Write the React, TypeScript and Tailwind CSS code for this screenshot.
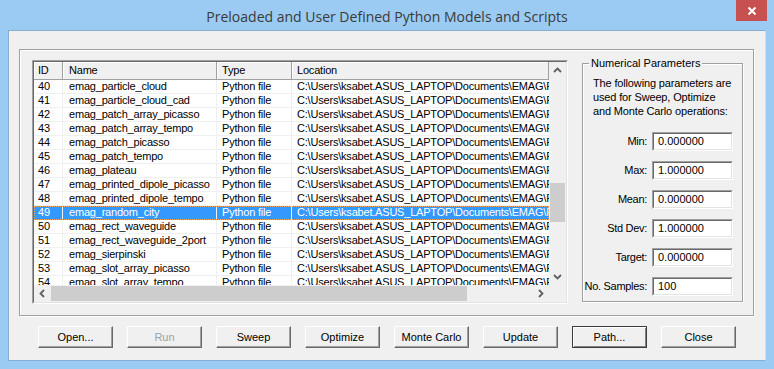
import type { ReactNode } from "react";

const LOC = "C:\\Users\\ksabet.ASUS_LAPTOP\\Documents\\EMAG\\Python\\models";

const rows = [
  { id: 40, name: "emag_particle_cloud" },
  { id: 41, name: "emag_particle_cloud_cad" },
  { id: 42, name: "emag_patch_array_picasso" },
  { id: 43, name: "emag_patch_array_tempo" },
  { id: 44, name: "emag_patch_picasso" },
  { id: 45, name: "emag_patch_tempo" },
  { id: 46, name: "emag_plateau" },
  { id: 47, name: "emag_printed_dipole_picasso" },
  { id: 48, name: "emag_printed_dipole_tempo" },
  { id: 49, name: "emag_random_city" },
  { id: 50, name: "emag_rect_waveguide" },
  { id: 51, name: "emag_rect_waveguide_2port" },
  { id: 52, name: "emag_sierpinski" },
  { id: 53, name: "emag_slot_array_picasso" },
  { id: 54, name: "emag_slot_array_tempo" },
];

const params = [
  { label: "Min:", value: "0.000000" },
  { label: "Max:", value: "1.000000" },
  { label: "Mean:", value: "0.000000" },
  { label: "Std Dev:", value: "1.000000" },
  { label: "Target:", value: "0.000000" },
  { label: "No. Samples:", value: "100" },
];

const buttons = ["Open...", "Run", "Sweep", "Optimize", "Monte Carlo", "Update", "Path...", "Close"];

// small chevron used on the scrollbar arrows
function Arrow({ dir }: { dir: "up" | "down" | "left" | "right" }) {
  const pts = {
    up: "1,6 4.5,2.5 8,6",
    down: "1,3 4.5,6.5 8,3",
    left: "6,1 2.5,4.5 6,8",
    right: "3,1 6.5,4.5 3,8",
  }[dir];
  return (
    <svg width="9" height="9" viewBox="0 0 9 9">
      <polyline points={pts} fill="none" stroke="#606060" strokeWidth="1.8" />
    </svg>
  );
}

function Sunken({ className, children }: { className?: string; children: ReactNode }) {
  return (
    <div className={`border border-t-[#a0a0a0] border-l-[#a0a0a0] border-b-white border-r-white ${className ?? ""}`}>
      <div className="w-full h-full border border-t-[#696969] border-l-[#696969] border-b-[#e3e3e3] border-r-[#e3e3e3] bg-white">
        {children}
      </div>
    </div>
  );
}

function HeaderCell({ w, pl, children }: { w: string; pl: string; children: ReactNode }) {
  return (
    <div
      className={`${w} ${pl} h-full flex items-center shrink-0 border-r border-r-[#a0a0a0] border-l border-l-white shadow-[inset_0_1px_0_white]`}
    >
      {children}
    </div>
  );
}

function App() {
  return (
    <div
      className="w-[774px] h-[369px] bg-[#9bcbf2] flex flex-col relative"
      style={{ fontFamily: '"Liberation Sans", Arial, sans-serif' }}
    >
      {/* title bar */}
      <div className="h-[30px] flex items-center justify-center shrink-0">
        <span
          className="text-[14px] text-[#3a3a3a] pt-[2px]"
          style={{ fontFamily: '"Open Sans", "Noto Sans", sans-serif' }}
        >
          Preloaded and User Defined Python Models and Scripts
        </span>
      </div>
      <div className="absolute top-0 right-[7px] w-[31px] h-[21px] bg-[#c75050] flex items-center justify-center">
        <svg width="10" height="10" viewBox="0 0 10 10">
          <path d="M1.5 1.5 L8.5 8.5 M8.5 1.5 L1.5 8.5" stroke="white" strokeWidth="2" />
        </svg>
      </div>

      {/* client area */}
      <div className="mx-[8px] h-[331px] bg-[#f0f0f0] border border-[#86add2] border-r-[#c9e0f3] flex flex-col text-[11px] text-black">
        <div className="mt-[18px] ml-[10px] mr-[11px] h-[267px] border border-[#a0a0a0] shadow-[inset_1px_1px_0_white,1px_1px_0_white] flex items-start pt-[10px] pl-[12px]">
          {/* list view */}
          <Sunken className="w-[536px] h-[244px] shrink-0">
            <div className="flex flex-col w-full h-full tracking-[-0.2px]">
              <div className="flex flex-1 min-h-0">
                <div className="flex-1 min-w-0 flex flex-col overflow-hidden">
                  <div className="h-[18px] flex shrink-0 bg-[#f0f0f0] border-b border-b-[#a0a0a0]">
                    <HeaderCell w="w-[29px]" pl="pl-[3px]">ID</HeaderCell>
                    <HeaderCell w="w-[154px]" pl="pl-[5px]">Name</HeaderCell>
                    <HeaderCell w="w-[75px]" pl="pl-[4px]">Type</HeaderCell>
                    <HeaderCell w="flex-1" pl="pl-[4px]">Location</HeaderCell>
                  </div>
                  <div className="flex flex-col overflow-hidden">
                    {rows.map((r) => {
                      const sel = r.id === 49;
                      return (
                        <div
                          key={r.id}
                          className={`h-[14px] shrink-0 flex leading-[13px] whitespace-nowrap ${
                            sel
                              ? "bg-[#3399ff] text-white outline outline-1 outline-dotted outline-offset-[-1px] outline-[#f0a860]"
                              : "border-b border-b-[#f0f0f0]"
                          }`}
                        >
                          <div className="w-[29px] pl-[4px] shrink-0 border-r border-r-[#f0f0f0]">{r.id}</div>
                          <div className="w-[154px] pl-[6px] shrink-0 border-r border-r-[#f0f0f0] overflow-hidden">{r.name}</div>
                          <div className="w-[75px] pl-[5px] shrink-0 border-r border-r-[#f0f0f0]">Python file</div>
                          <div className="flex-1 pl-[5px] overflow-hidden">{LOC}</div>
                        </div>
                      );
                    })}
                  </div>
                </div>
                {/* vertical scrollbar */}
                <div className="w-[17px] shrink-0 bg-[#f0f0f0] flex flex-col items-center">
                  <div className="h-[17px] flex items-center justify-center">
                    <Arrow dir="up" />
                  </div>
                  <div className="flex-1 w-full flex flex-col">
                    <div className="h-[104px]" />
                    <div className="h-[39px] mx-[1px] bg-[#cdcdcd]" />
                  </div>
                  <div className="h-[17px] flex items-center justify-center">
                    <Arrow dir="down" />
                  </div>
                </div>
              </div>
              {/* horizontal scrollbar */}
              <div className="h-[17px] shrink-0 flex bg-[#f0f0f0]">
                <div className="w-[17px] flex items-center justify-center">
                  <Arrow dir="left" />
                </div>
                <div className="flex-1 flex items-center">
                  <div className="w-[416px] h-[15px] bg-[#cdcdcd]" />
                </div>
                <div className="w-[17px] flex items-center justify-center">
                  <Arrow dir="right" />
                </div>
                <div className="w-[17px]" />
              </div>
            </div>
          </Sunken>

          {/* numerical parameters group */}
          <div className="ml-[14px] mt-[3px] w-[161px] h-[239px] relative border border-[#a0a0a0] shadow-[inset_1px_1px_0_white,1px_1px_0_white] pl-[10px] pr-[9px] pt-[12px]">
            <span className="absolute -top-[8px] left-[6px] px-[2px] bg-[#f0f0f0] leading-[14px] whitespace-nowrap">
              Numerical Parameters
            </span>
            <p className="leading-[14px] whitespace-nowrap tracking-[-0.15px]">
              The following parameters are
              <br />
              used for Sweep, Optimize
              <br />
              and Monte Carlo operations:
            </p>
            <div className="mt-[14px] flex flex-col gap-[10px]">
              {params.map((p) => (
                <div key={p.label} className="flex items-center justify-end gap-[5px] h-[19px]">
                  <span className="whitespace-nowrap tracking-[-0.3px]">{p.label}</span>
                  <Sunken className="w-[81px] h-[19px] shrink-0">
                    <div className="pl-[4px] leading-[15px]">{p.value}</div>
                  </Sunken>
                </div>
              ))}
            </div>
          </div>
        </div>

        {/* buttons */}
        <div className="mt-[10px] ml-[29px] flex gap-[14px]">
          {buttons.map((b) => {
            const disabled = b === "Run";
            const def = b === "Path...";
            return (
              <div
                key={b}
                className={`w-[75px] h-[22px] flex items-center justify-center ${
                  def
                    ? "border border-[#3c3c3c] shadow-[inset_1px_1px_0_white,inset_-1px_-1px_0_#808080]"
                    : "border border-t-white border-l-white border-b-[#696969] border-r-[#696969] shadow-[inset_-1px_-1px_0_#a0a0a0]"
                } bg-[#f0f0f0] ${disabled ? "text-[#a0a0a0]" : "text-black"}`}
              >
                {b}
              </div>
            );
          })}
        </div>
      </div>
    </div>
  );
}

export default App;
